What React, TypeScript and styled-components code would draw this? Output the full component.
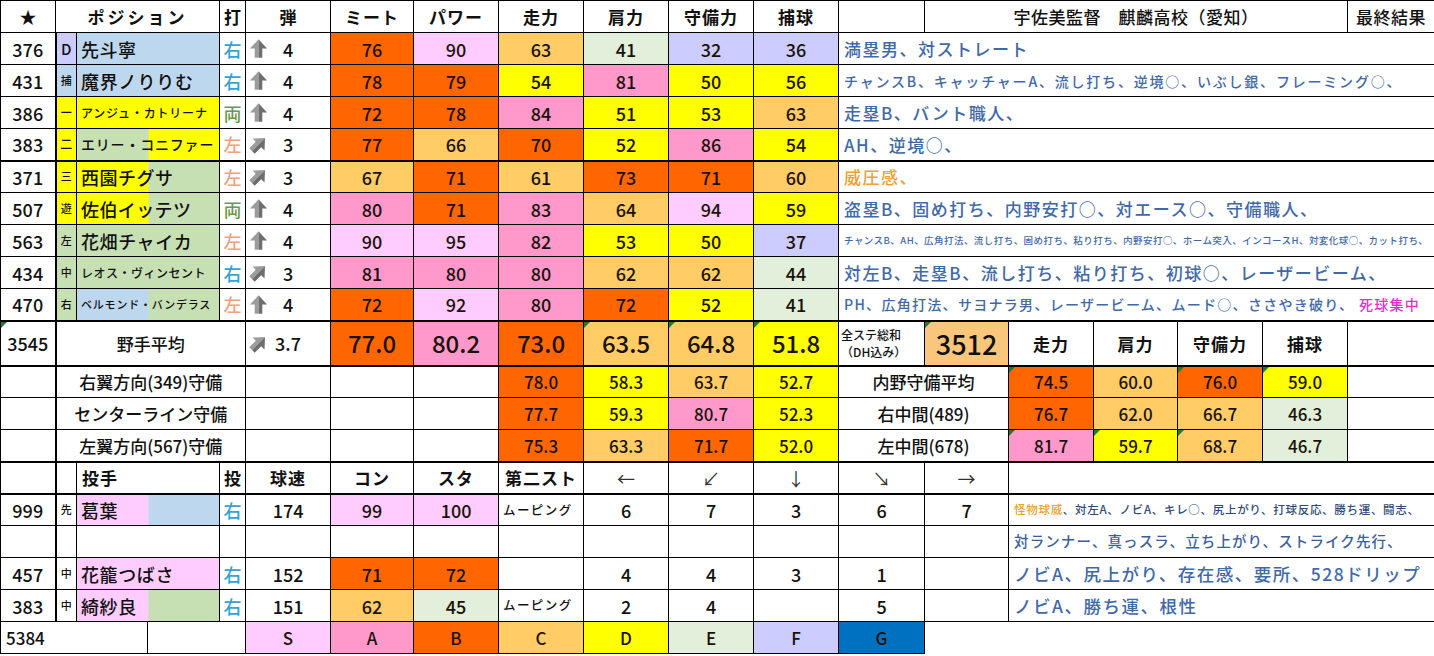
import styled, { createGlobalStyle, css } from "styled-components";

type Grade = "S" | "A" | "B" | "C" | "D" | "E" | "F" | "G";
type Dir = "up" | "ne";
type Seg = { t: string; c?: string };

const gradeColors: Record<Grade, string> = {
  S: "#ffccff",
  A: "#ff99cc",
  B: "#ff6600",
  C: "#ffcc66",
  D: "#ffff00",
  E: "#e2efda",
  F: "#ccccff",
  G: "#0070c0",
};

const gradeOf = (v: number): Grade =>
  v >= 90 ? "S" : v >= 80 ? "A" : v >= 70 ? "B" : v >= 60 ? "C" : v >= 50 ? "D" : v >= 40 ? "E" : v >= 20 ? "F" : "G";

const BLUE = "#bdd7ee";
const GREEN = "#c6e0b4";
const YELLOW = "#ffff00";
const PINK = "#ffccff";
const LAV = "#ccccff";
const SKILL = "#4169a8";
const ORANGE = "#eea032";
const MAGENTA = "#e22fd0";

const hands: Record<string, string> = { 右: "#33a3d6", 両: "#6b9a48", 左: "#f2a07e" };

const widths = [55, 21, 71, 72, 26, 85, 83, 85, 85, 85, 85, 85, 86, 84, 85, 84, 85, 85, 87];

const GlobalStyle = createGlobalStyle`
  html, body { margin: 0; padding: 0; background: #fff; }
  body { font-family: "Noto Sans CJK JP", "Noto Sans", sans-serif; color: #111; }
`;

const Sheet = styled.table`
  width: 1434px;
  table-layout: fixed;
  border-collapse: collapse;
  font-family: "Noto Sans CJK JP", "Noto Sans", sans-serif;
`;

const Col = styled.col<{ $w: number }>`
  width: ${(p) => p.$w}px;
`;

const Row = styled.tr<{ $h?: number; $thick?: boolean }>`
  height: ${(p) => p.$h ?? 32}px;
  ${(p) =>
    p.$thick &&
    css`
      & > td {
        border-top: 2px solid #000;
      }
    `}
`;

const cellBase = css`
  border: 1px solid #000;
  padding: 0 3px;
  vertical-align: middle;
  white-space: nowrap;
  overflow: hidden;
  line-height: 1;
  text-align: center;
  color: #111;
  background: #fff;
`;

const flagged = css`
  position: relative;
  &::before {
    content: "";
    position: absolute;
    top: 0;
    left: 0;
    border-top: 6px solid #1f7a3a;
    border-right: 6px solid transparent;
  }
`;

const Blank = styled.td<{ $open?: boolean }>`
  ${cellBase}
  ${(p) =>
    p.$open &&
    css`
      border-right-color: #fff;
      border-bottom-color: #fff;
    `}
`;

const IdCell = styled.td<{ $flag?: boolean; $plain?: boolean }>`
  ${cellBase}
  font-size: 18px;
  font-weight: 500;
  border-right: 2px solid #000;
  ${(p) =>
    p.$plain &&
    css`
      text-align: left;
      padding-left: 5px;
      border-right: 1px solid #000;
      font-size: 17px;
    `}
  ${(p) => p.$flag && flagged}
`;

const HeadCell = styled.td<{ $size?: number; $weight?: number; $spacing?: number; $align?: "left" | "center" }>`
  ${cellBase}
  font-size: ${(p) => p.$size ?? 17}px;
  font-weight: ${(p) => p.$weight ?? 700};
  letter-spacing: ${(p) => p.$spacing ?? 0}px;
  text-align: ${(p) => p.$align ?? "center"};
  padding-left: ${(p) => (p.$align === "left" ? 5 : 3)}px;
`;

const ArrowHead = styled(HeadCell)`
  font-weight: 400;
  font-size: 18px;
  color: #333;
`;

const PosCell = styled.td<{ $bg?: string; $size: number }>`
  ${cellBase}
  padding: 0;
  background: ${(p) => p.$bg ?? "#fff"};
  font-size: ${(p) => p.$size}px;
  font-weight: 500;
`;

const NameCell = styled.td<{ $left: string; $right: string; $size: number; $spacing: number }>`
  ${cellBase}
  text-align: left;
  padding-left: 4px;
  background: linear-gradient(90deg, ${(p) => p.$left} 0 71px, ${(p) => p.$right} 71px 100%);
  font-size: ${(p) => p.$size}px;
  letter-spacing: ${(p) => p.$spacing}px;
  font-weight: 500;
`;

const HandCell = styled.td<{ $color: string }>`
  ${cellBase}
  padding: 0;
  font-size: 18px;
  font-weight: 500;
  color: ${(p) => p.$color};
`;

const PowerCell = styled.td`
  ${cellBase}
  padding: 0 1px;
  font-size: 18px;
  font-weight: 500;
`;

const PowerInner = styled.div`
  display: grid;
  grid-template-columns: 22px 1fr 22px;
  align-items: center;
  justify-items: center;
`;

const ArrowSvg = styled.svg`
  display: block;
  width: 21px;
  height: 21px;
`;

const StatCell = styled.td<{ $grade?: Grade; $size?: number; $flag?: boolean }>`
  ${cellBase}
  background: ${(p) => (p.$grade ? gradeColors[p.$grade] : "#fff")};
  font-size: ${(p) => p.$size ?? 18}px;
  font-weight: 500;
  color: #1a1208;
  ${(p) => p.$flag && flagged}
`;

const SkillCell = styled.td<{ $size: number; $spacing: number; $color?: string }>`
  ${cellBase}
  text-align: left;
  padding-left: 5px;
  font-size: ${(p) => p.$size}px;
  letter-spacing: ${(p) => p.$spacing}px;
  font-weight: 500;
  color: ${(p) => p.$color ?? SKILL};
`;

const Accent = styled.span<{ $color: string }>`
  color: ${(p) => p.$color};
`;

const LabelCell = styled.td`
  ${cellBase}
  font-size: 17px;
  font-weight: 500;
`;

const NoteCell = styled.td`
  ${cellBase}
  text-align: left;
  padding: 0 2px;
  font-size: 12px;
  line-height: 1.45;
  font-weight: 500;
`;

const TotalCell = styled.td`
  ${cellBase}
  ${flagged}
  background: #f9c67c;
  font-size: 27px;
  font-weight: 500;
`;

const TypeCell = styled.td`
  ${cellBase}
  text-align: left;
  padding-left: 4px;
  font-size: 12.5px;
  letter-spacing: 1.4px;
  font-weight: 500;
`;

const DirCell = styled.td`
  ${cellBase}
  font-size: 18px;
  font-weight: 500;
`;

// Excel-style grey trend arrow (icon set), split in a light and a dark half
function TrendArrow({ dir }: { dir: Dir }) {
  return (
    <ArrowSvg viewBox="-1 -1 16 16" aria-hidden>
      <g transform={dir === "ne" ? "rotate(45 7 7) translate(0.5 0)" : "translate(0.5 0)"}>
        <path d="M6.5 0 L0 7 H3.6 V14 H6.5 Z" fill="#9c9c9c" />
        <path d="M6.5 0 L13 7 H9.4 V14 H6.5 Z" fill="#6e6e6e" />
      </g>
    </ArrowSvg>
  );
}

type Batter = {
  id: number;
  pos: string;
  posBg: string;
  posSize: number;
  name: string;
  left: string;
  right: string;
  nameSize: number;
  nameSpacing: number;
  hand: string;
  dir: Dir;
  dan: number;
  stats: number[];
  skill: Seg[];
  skillSize: number;
  skillSpacing: number;
};

const big = { skillSize: 17, skillSpacing: 1.5 };

const batters: Batter[] = [
  { id: 376, pos: "D", posBg: LAV, posSize: 15, name: "先斗寧", left: BLUE, right: BLUE, nameSize: 18, nameSpacing: 0.5, hand: "右", dir: "up", dan: 4, stats: [76, 90, 63, 41, 32, 36], skill: [{ t: "満塁男、対ストレート" }], ...big },
  { id: 431, pos: "捕", posBg: BLUE, posSize: 11, name: "魔界ノりりむ", left: BLUE, right: BLUE, nameSize: 18, nameSpacing: 0.8, hand: "右", dir: "up", dan: 4, stats: [78, 79, 54, 81, 50, 56], skill: [{ t: "チャンスB、キャッチャーA、流し打ち、逆境○、いぶし銀、フレーミング○、" }], skillSize: 14, skillSpacing: 1.8 },
  { id: 386, pos: "一", posBg: YELLOW, posSize: 11, name: "アンジュ・カトリーナ", left: YELLOW, right: YELLOW, nameSize: 12, nameSpacing: 0.8, hand: "両", dir: "up", dan: 4, stats: [72, 78, 84, 51, 53, 63], skill: [{ t: "走塁B、バント職人、" }], ...big },
  { id: 383, pos: "二", posBg: YELLOW, posSize: 12, name: "エリー・コニファー", left: GREEN, right: YELLOW, nameSize: 14, nameSpacing: 0.8, hand: "左", dir: "ne", dan: 3, stats: [77, 66, 70, 52, 86, 54], skill: [{ t: "AH、逆境○、" }], ...big },
  { id: 371, pos: "三", posBg: YELLOW, posSize: 11, name: "西園チグサ", left: YELLOW, right: GREEN, nameSize: 18, nameSpacing: 0.5, hand: "左", dir: "ne", dan: 3, stats: [67, 71, 61, 73, 71, 60], skill: [{ t: "威圧感、", c: ORANGE }], ...big },
  { id: 507, pos: "遊", posBg: YELLOW, posSize: 11, name: "佐伯イッテツ", left: YELLOW, right: GREEN, nameSize: 18, nameSpacing: 0.4, hand: "両", dir: "up", dan: 4, stats: [80, 71, 83, 64, 94, 59], skill: [{ t: "盗塁B、固め打ち、内野安打○、対エース○、守備職人、" }], ...big },
  { id: 563, pos: "左", posBg: GREEN, posSize: 11, name: "花畑チャイカ", left: GREEN, right: GREEN, nameSize: 18, nameSpacing: 0.6, hand: "左", dir: "up", dan: 4, stats: [90, 95, 82, 53, 50, 37], skill: [{ t: "チャンスB、AH、広角打法、流し打ち、固め打ち、粘り打ち、内野安打○、ホーム突入、インコースH、対変化球○、カット打ち、" }], skillSize: 9.5, skillSpacing: 0.45 },
  { id: 434, pos: "中", posBg: GREEN, posSize: 11, name: "レオス・ヴィンセント", left: GREEN, right: GREEN, nameSize: 12, nameSpacing: 0.5, hand: "右", dir: "ne", dan: 3, stats: [81, 80, 80, 62, 62, 44], skill: [{ t: "対左B、走塁B、流し打ち、粘り打ち、初球○、レーザービーム、" }], ...big },
  { id: 470, pos: "右", posBg: GREEN, posSize: 11, name: "ベルモンド・バンデラス", left: BLUE, right: GREEN, nameSize: 11, nameSpacing: 0.8, hand: "左", dir: "up", dan: 4, stats: [72, 92, 80, 72, 52, 41], skill: [{ t: "PH、広角打法、サヨナラ男、レーザービーム、ムード○、ささやき破り、 " }, { t: "死球集中", c: MAGENTA }], skillSize: 14, skillSpacing: 1.3 },
];

const headers = ["ミート", "パワー", "走力", "肩力", "守備力", "捕球"];
const averages = [77.0, 80.2, 73.0, 63.5, 64.8, 51.8];
const avgFlags = [false, false, false, true, true, true];

type Zone = { label: string; vals: number[]; side: string; sideVals: number[]; flags: boolean[] };

const zones: Zone[] = [
  { label: "右翼方向(349)守備", vals: [78.0, 58.3, 63.7, 52.7], side: "内野守備平均", sideVals: [74.5, 60.0, 76.0, 59.0], flags: [true, false, true, true] },
  { label: "センターライン守備", vals: [77.7, 59.3, 80.7, 52.3], side: "右中間(489)", sideVals: [76.7, 62.0, 66.7, 46.3], flags: [false, false, false, false] },
  { label: "左翼方向(567)守備", vals: [75.3, 63.3, 71.7, 52.0], side: "左中間(678)", sideVals: [81.7, 59.7, 68.7, 46.7], flags: [true, true, true, false] },
];

type Pitcher = {
  id: number;
  role: string;
  name: string;
  left: string;
  right: string;
  speed: number;
  con: number;
  sta: number;
  second: string;
  dirs: (number | "")[];
  skill: Seg[];
  skillSize: number;
  skillSpacing: number;
  skillColor?: string;
};

const pitchers: Pitcher[] = [
  { id: 999, role: "先", name: "葛葉", left: PINK, right: BLUE, speed: 174, con: 99, sta: 100, second: "ムーピング", dirs: [6, 7, 3, 6, 7], skill: [{ t: "怪物球威", c: ORANGE }, { t: "、対左A、ノビA、キレ○、尻上がり、打球反応、勝ち運、闘志、" }], skillSize: 11.5, skillSpacing: 0.7, skillColor: "#2e4a78" },
  { id: 457, role: "中", name: "花籠つばさ", left: PINK, right: PINK, speed: 152, con: 71, sta: 72, second: "", dirs: [4, 4, 3, 1, ""], skill: [{ t: "ノビA、尻上がり、存在感、要所、528ドリップ" }], skillSize: 17.5, skillSpacing: 1.5 },
  { id: 383, role: "中", name: "綺紗良", left: PINK, right: GREEN, speed: 151, con: 62, sta: 45, second: "ムーピング", dirs: [2, 4, "", 5, ""], skill: [{ t: "ノビA、勝ち運、根性" }], skillSize: 17.5, skillSpacing: 1.5 },
];

const legend: Grade[] = ["S", "A", "B", "C", "D", "E", "F", "G"];

const Segments = ({ segs }: { segs: Seg[] }) => (
  <>
    {segs.map((s, i) => (s.c ? <Accent key={i} $color={s.c}>{s.t}</Accent> : <span key={i}>{s.t}</span>))}
  </>
);

function BatterRow({ b, thick }: { b: Batter; thick?: boolean }) {
  return (
    <Row $thick={thick}>
      <IdCell>{b.id}</IdCell>
      <PosCell $bg={b.posBg} $size={b.posSize}>{b.pos}</PosCell>
      <NameCell colSpan={2} $left={b.left} $right={b.right} $size={b.nameSize} $spacing={b.nameSpacing}>
        {b.name}
      </NameCell>
      <HandCell $color={hands[b.hand]}>{b.hand}</HandCell>
      <PowerCell>
        <PowerInner>
          <TrendArrow dir={b.dir} />
          <span>{b.dan}</span>
        </PowerInner>
      </PowerCell>
      {b.stats.map((v, i) => (
        <StatCell key={i} $grade={gradeOf(v)}>{v}</StatCell>
      ))}
      <SkillCell colSpan={7} $size={b.skillSize} $spacing={b.skillSpacing}>
        <Segments segs={b.skill} />
      </SkillCell>
    </Row>
  );
}

function PitcherRow({ p, thick }: { p: Pitcher; thick?: boolean }) {
  return (
    <Row $thick={thick}>
      <IdCell>{p.id}</IdCell>
      <PosCell $size={11}>{p.role}</PosCell>
      <NameCell colSpan={2} $left={p.left} $right={p.right} $size={18} $spacing={0.6}>
        {p.name}
      </NameCell>
      <HandCell $color={hands["右"]}>右</HandCell>
      <DirCell>{p.speed}</DirCell>
      <StatCell $grade={gradeOf(p.con)}>{p.con}</StatCell>
      <StatCell $grade={gradeOf(p.sta)}>{p.sta}</StatCell>
      <TypeCell>{p.second}</TypeCell>
      {p.dirs.map((d, i) => (
        <DirCell key={i}>{d}</DirCell>
      ))}
      <SkillCell colSpan={5} $size={p.skillSize} $spacing={p.skillSpacing} $color={p.skillColor}>
        <Segments segs={p.skill} />
      </SkillCell>
    </Row>
  );
}

export default function App() {
  return (
    <>
      <GlobalStyle />
      <Sheet>
        <colgroup>
          {widths.map((w, i) => (
            <Col key={i} $w={w} />
          ))}
        </colgroup>
        <tbody>
          <Row>
            <IdCell as={HeadCell}>★</IdCell>
            <HeadCell colSpan={3} $spacing={3}>ポジション</HeadCell>
            <HeadCell>打</HeadCell>
            <HeadCell>弾</HeadCell>
            {headers.map((h) => (
              <HeadCell key={h} $spacing={1}>{h}</HeadCell>
            ))}
            <Blank />
            <HeadCell colSpan={5} $weight={500} $spacing={0.5}>宇佐美監督　麒麟高校（愛知）</HeadCell>
            <HeadCell $weight={500} $spacing={0.5}>最終結果</HeadCell>
          </Row>

          {batters.map((b, i) => (
            <BatterRow key={b.id + b.name} b={b} thick={i === 4} />
          ))}

          <Row $h={45} $thick>
            <IdCell $flag>3545</IdCell>
            <LabelCell colSpan={4}>野手平均</LabelCell>
            <PowerCell>
              <PowerInner>
                <TrendArrow dir="ne" />
                <span>3.7</span>
              </PowerInner>
            </PowerCell>
            {averages.map((v, i) => (
              <StatCell key={i} $grade={gradeOf(v)} $size={24} $flag={avgFlags[i]}>
                {v.toFixed(1)}
              </StatCell>
            ))}
            <NoteCell>
              全ステ総和
              <br />
              （DH込み）
            </NoteCell>
            <TotalCell>3512</TotalCell>
            {["走力", "肩力", "守備力", "捕球"].map((h) => (
              <HeadCell key={h} $spacing={1}>{h}</HeadCell>
            ))}
            <Blank />
          </Row>

          {zones.map((z, i) => (
            <Row key={z.label} $thick={i === 0}>
              <IdCell />
              <LabelCell colSpan={4}>{z.label}</LabelCell>
              <Blank />
              <Blank />
              <Blank />
              {z.vals.map((v, j) => (
                <StatCell key={j} $grade={gradeOf(v)} $size={17}>{v.toFixed(1)}</StatCell>
              ))}
              <LabelCell colSpan={2}>{z.side}</LabelCell>
              {z.sideVals.map((v, j) => (
                <StatCell key={j} $grade={gradeOf(v)} $size={17} $flag={z.flags[j]}>
                  {v.toFixed(1)}
                </StatCell>
              ))}
              <Blank />
            </Row>
          ))}

          <Row $thick>
            <IdCell />
            <Blank />
            <HeadCell colSpan={2} $align="left" $spacing={1}>投手</HeadCell>
            <HeadCell>投</HeadCell>
            <HeadCell $spacing={1}>球速</HeadCell>
            <HeadCell $spacing={1}>コン</HeadCell>
            <HeadCell $spacing={1}>スタ</HeadCell>
            <HeadCell $spacing={1}>第二スト</HeadCell>
            {["←", "↙", "↓", "↘", "→"].map((a) => (
              <ArrowHead key={a}>{a}</ArrowHead>
            ))}
            <Blank colSpan={5} />
          </Row>

          <PitcherRow p={pitchers[0]} thick />

          <Row>
            <IdCell />
            <Blank />
            <Blank colSpan={2} />
            {Array.from({ length: 10 }, (_, i) => (
              <Blank key={i} />
            ))}
            <SkillCell colSpan={5} $size={14.5} $spacing={1.1} $color="#3a5f9c">
              対ランナー、真っスラ、立ち上がり、ストライク先行、
            </SkillCell>
          </Row>

          {pitchers.slice(1).map((p) => (
            <PitcherRow key={p.id + p.name} p={p} />
          ))}

          <Row>
            <IdCell colSpan={3} $plain>5384</IdCell>
            <Blank colSpan={2} />
            {legend.map((g) => (
              <StatCell key={g} $grade={g} $size={17}>{g}</StatCell>
            ))}
            <Blank colSpan={6} $open />
          </Row>
        </tbody>
      </Sheet>
    </>
  );
}
